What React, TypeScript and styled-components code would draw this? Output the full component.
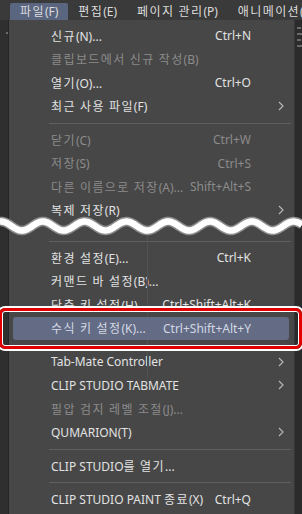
import React from "react";
import styled, { createGlobalStyle } from "styled-components";

const GlobalStyle = createGlobalStyle`
  html, body {
    margin: 0;
    padding: 0;
    background: #2d2d2d;
  }
  body {
    font-family: "Noto Sans", "Noto Sans CJK KR", sans-serif;
    font-size: 12px;
  }
`;

const Page = styled.div`
  width: 302px;
  height: 514px;
  overflow: hidden;
  display: flex;
  flex-direction: column;
  background: #2d2d2d;
`;

const MenuBar = styled.div`
  height: 20px;
  flex: none;
  display: flex;
  align-items: flex-end;
  padding-left: 10px;
  background: #3a3a3a;
  white-space: nowrap;
`;

const MenuBarItem = styled.div<{ $active?: boolean }>`
  height: 17px;
  line-height: 16px;
  padding: 0 10px;
  color: #dcdcdc;
  background: ${(p) => (p.$active ? "#5a6580" : "transparent")};
  border-radius: 2px 2px 0 0;
`;

// Korean runs are set a touch wider, like the Malgun Gothic of the original
const Hangul = styled.span`
  font-family: "Noto Sans CJK KR", sans-serif;
  letter-spacing: 1.4px;
`;

const Body = styled.div`
  flex: 1;
  display: flex;
`;

const LeftStrip = styled.div`
  width: 8px;
  flex: none;
  background: #2f2f2f;
  display: flex;
  flex-direction: column;
  align-items: flex-end;
  padding-top: 12px;
`;

const RightStrip = styled.div`
  width: 7px;
  flex: none;
  background: #2b2b2b;
  display: flex;
  flex-direction: column;
  gap: 4px;
  padding-top: 7px;
  padding-left: 2px;
`;

const Tick = styled.div<{ $w: number }>`
  width: ${(p) => p.$w}px;
  height: 2px;
  background: #6a6a6a;
`;

const Panel = styled.div`
  position: relative;
  width: 285px;
  flex: none;
  background: #474747;
  border-left: 1px solid #262626;
  border-right: 1px solid #363636;
  padding-top: 4px;
`;

const Row = styled.div<{ $highlight?: boolean; $disabled?: boolean }>`
  height: 23.5px;
  margin: 0 5px 0 4px;
  padding-left: 38px;
  display: flex;
  align-items: center;
  white-space: nowrap;
  border-radius: 3px;
  color: ${(p) => (p.$disabled ? "#8b8b8b" : p.$highlight ? "#d3d8e4" : "#e2e2e2")};
  background: ${(p) => (p.$highlight ? "#636c84" : "transparent")};
`;

const Label = styled.span`
  flex: 1;
`;

const Shortcut = styled.span`
  flex: none;
`;

const ArrowCell = styled.span`
  width: 38px;
  flex: none;
  display: flex;
  align-items: center;
  padding-left: 27px;
  box-sizing: border-box;
`;

const Separator = styled.div`
  height: 10px;
  display: flex;
  align-items: center;
  margin: 0 3px 0 40px;

  &::after {
    content: "";
    flex: 1;
    height: 1px;
    background: #5f5f5f;
  }
`;

const CutBlock = styled.div`
  position: relative;
  height: 14px;
`;

const Wave = styled.svg`
  position: absolute;
  left: -9px;
  top: -8px;
  z-index: 2;
`;

const FrameWrap = styled.div`
  position: relative;
`;

const RedFrame = styled.div`
  position: absolute;
  left: -10px;
  right: -8px;
  top: -9px;
  bottom: -9px;
  border: 3px solid #e30000;
  border-radius: 6px;
  box-shadow: 0 0 0 2px #ffffff, inset 0 0 0 1px #ffffff;
  z-index: 3;
`;

const SeamLine = styled.div`
  position: absolute;
  left: 138px;
  top: 215px;
  width: 1px;
  height: 142px;
  background: #525252;
`;

type Entry =
  | { kind: "item"; label: string; shortcut?: string; sub?: boolean; disabled?: boolean; highlight?: boolean }
  | { kind: "sep" }
  | { kind: "cut" };

const entries: Entry[] = [
  { kind: "item", label: "신규(N)...", shortcut: "Ctrl+N" },
  { kind: "item", label: "클립보드에서 신규 작성(B)", disabled: true },
  { kind: "item", label: "열기(O)...", shortcut: "Ctrl+O" },
  { kind: "item", label: "최근 사용 파일(F)", sub: true },
  { kind: "sep" },
  { kind: "item", label: "닫기(C)", shortcut: "Ctrl+W", disabled: true },
  { kind: "item", label: "저장(S)", shortcut: "Ctrl+S", disabled: true },
  { kind: "item", label: "다른 이름으로 저장(A)...", shortcut: "Shift+Alt+S", disabled: true },
  { kind: "item", label: "복제 저장(R)", sub: true },
  { kind: "cut" },
  { kind: "sep" },
  { kind: "item", label: "환경 설정(E)...", shortcut: "Ctrl+K" },
  { kind: "item", label: "커맨드 바 설정(B)..." },
  { kind: "item", label: "단축 키 설정(H)...", shortcut: "Ctrl+Shift+Alt+K" },
  { kind: "item", label: "수식 키 설정(K)...", shortcut: "Ctrl+Shift+Alt+Y", highlight: true },
  { kind: "sep" },
  { kind: "item", label: "Tab-Mate Controller", sub: true },
  { kind: "item", label: "CLIP STUDIO TABMATE", sub: true },
  { kind: "item", label: "필압 검지 레벨 조절(J)...", disabled: true },
  { kind: "item", label: "QUMARION(T)", sub: true },
  { kind: "sep" },
  { kind: "item", label: "CLIP STUDIO를 열기..." },
  { kind: "sep" },
  { kind: "item", label: "CLIP STUDIO PAINT 종료(X)", shortcut: "Ctrl+Q" },
];

// split a label into Hangul and other runs so the Hangul can be spaced
const Text: React.FC<{ children: string }> = ({ children }) => (
  <>
    {children.split(/([\uAC00-\uD7A3][\uAC00-\uD7A3 ]*[\uAC00-\uD7A3]|[\uAC00-\uD7A3])/).map((part, i) =>
      /[\uAC00-\uD7A3]/.test(part) ? <Hangul key={i}>{part}</Hangul> : part
    )}
  </>
);

const Chevron = () => (
  <svg width="6" height="10" viewBox="0 0 6 10">
    <polyline points="1,1 5,5 1,9" fill="none" stroke="#b4b4b4" strokeWidth="1.2" />
  </svg>
);

const wavePath = (() => {
  const pts: string[] = [];
  for (let x = 0; x <= 302; x += 1) {
    const y = 12 - 4.5 * Math.cos((2 * Math.PI * (x - 1)) / 41.8);
    pts.push(`${x === 0 ? "M" : "L"}${x},${y.toFixed(2)}`);
  }
  return pts.join(" ");
})();

const TornEdge = () => (
  <CutBlock>
    <Wave width="302" height="24" viewBox="0 0 302 24">
      <path d={wavePath} fill="none" stroke="#8e8e8e" strokeWidth="9.5" />
      <path d={wavePath} fill="none" stroke="#ffffff" strokeWidth="6.5" />
    </Wave>
  </CutBlock>
);

const MenuRow: React.FC<{ e: Extract<Entry, { kind: "item" }> }> = ({ e }) => (
  <Row $disabled={e.disabled} $highlight={e.highlight}>
    <Label>
      <Text>{e.label}</Text>
    </Label>
    {e.shortcut && <Shortcut>{e.shortcut}</Shortcut>}
    <ArrowCell>{e.sub && <Chevron />}</ArrowCell>
  </Row>
);

const App: React.FC = () => (
  <Page>
    <GlobalStyle />
    <MenuBar>
      <MenuBarItem $active>
        <Text>파일(F)</Text>
      </MenuBarItem>
      <MenuBarItem>
        <Text>편집(E)</Text>
      </MenuBarItem>
      <MenuBarItem>
        <Text>페이지 관리(P)</Text>
      </MenuBarItem>
      <MenuBarItem>
        <Text>애니메이션(A)</Text>
      </MenuBarItem>
    </MenuBar>
    <Body>
      <LeftStrip>
        <Tick $w={2} />
      </LeftStrip>
      <Panel>
        <SeamLine />
        {entries.map((e, i) => {
          if (e.kind === "sep") return <Separator key={i} />;
          if (e.kind === "cut") return <TornEdge key={i} />;
          if (e.highlight)
            return (
              <FrameWrap key={i}>
                <MenuRow e={e} />
                <RedFrame />
              </FrameWrap>
            );
          return <MenuRow key={i} e={e} />;
        })}
      </Panel>
      <RightStrip>
        <Tick $w={4} />
        <Tick $w={5} />
        <Tick $w={4} />
        <Tick $w={5} />
      </RightStrip>
    </Body>
  </Page>
);

export default App;
